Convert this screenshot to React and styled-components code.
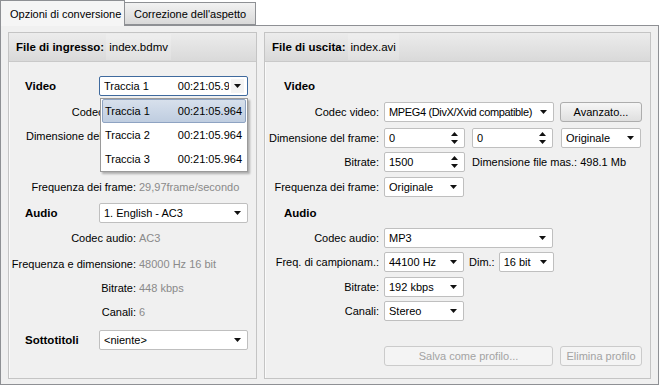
import React from 'react';
import styled, { createGlobalStyle } from 'styled-components';

const GlobalStyle = createGlobalStyle`
  html, body {
    margin: 0;
    padding: 0;
    background: #ffffff;
  }
  body {
    font-family: "Liberation Sans", Arial, sans-serif;
    font-size: 11px;
    color: #000;
  }
`;

const Window = styled.div`
  width: 659px;
  height: 387px;
  display: flex;
  flex-direction: column;
  background: #ffffff;
`;

const TabBar = styled.div`
  display: flex;
  align-items: flex-end;
  height: 25px;
  position: relative;
  z-index: 1;
`;

const Tab = styled.div`
  box-sizing: border-box;
  height: ${p => (p.$active ? '26px' : '23px')};
  margin-bottom: ${p => (p.$active ? '-1px' : '0')};
  padding: 0 9px;
  width: ${p => p.$width}px;
  display: flex;
  align-items: center;
  border: 1px solid #8e9094;
  border-bottom: ${p => (p.$active ? 'none' : '1px solid #8e9094')};
  border-left: ${p => (p.$first ? '1px solid #8e9094' : 'none')};
  background: ${p =>
    p.$active ? '#f5f5f5' : 'linear-gradient(#f2f2f2, #d9d9d9)'};
  font-size: 11px;
  white-space: nowrap;
`;

const TabPage = styled.div`
  box-sizing: border-box;
  height: 360px;
  border: 1px solid #8e9094;
  background: #f0f0f0;
  padding: 6px 7px 5px 7px;
  display: flex;
  gap: 7px;
`;

const Panel = styled.div`
  box-sizing: border-box;
  width: ${p => p.$width}px;
  height: 347px;
  border: 1px solid #c4c4c4;
  box-shadow: inset 1px 1px 0 #fafafa;
  display: flex;
  flex-direction: column;
`;

const PanelHeader = styled.div`
  height: 28px;
  border-bottom: 1px solid #c9c9c9;
  background: linear-gradient(#ececec, #d9d9d9);
  display: flex;
  align-items: center;
  padding-left: 7px;
  gap: 5px;
  font-size: 11.5px;
`;

const HeaderLabel = styled.span`
  font-weight: bold;
`;

const HeaderValue = styled.span`
  padding: 7px 3px;
  margin-left: -3px;
  background: rgba(255, 255, 255, 0.18);
`;

const PanelBody = styled.div`
  position: relative;
  flex: 1;
  display: flex;
  flex-direction: column;
  padding-top: 12px;
`;

const Row = styled.div`
  height: 24px;
  margin-top: ${p => p.$mt || 0}px;
  display: flex;
  align-items: center;
`;

const SectionTitle = styled.div`
  font-weight: bold;
  font-size: 11.5px;
  padding-left: ${p => p.$indent}px;
  width: ${p => p.$width}px;
  box-sizing: border-box;
`;

const Label = styled.div`
  width: ${p => p.$width}px;
  text-align: right;
  white-space: nowrap;
  flex-shrink: 0;
  margin-right: ${p => p.$gap}px;
`;

const InfoValue = styled.div`
  color: #8a8a8a;
  white-space: nowrap;
`;

const PlainText = styled.div`
  white-space: nowrap;
  margin-left: ${p => p.$ml || 0}px;
  margin-right: ${p => p.$mr || 0}px;
`;

const Field = styled.div`
  box-sizing: border-box;
  width: ${p => p.$width}px;
  height: 20px;
  margin-left: ${p => p.$ml || 0}px;
  background: #ffffff;
  border: 1px solid ${p => (p.$focused ? '#3f6a9e' : '#bfbfbf')};
  border-radius: 2px;
  display: flex;
  align-items: center;
  padding-left: 4px;
  padding-right: 3px;
  gap: 2px;
  flex-shrink: 0;
`;

const FieldText = styled.div`
  flex: 1;
  overflow: hidden;
  white-space: nowrap;
  display: flex;
  letter-spacing: ${p => (p.$tight ? '-0.35px' : 'normal')};
`;

const SplitText = styled.div`
  flex: 0 0 calc(100% + ${p => p.$overflow}px);
  display: flex;
  justify-content: space-between;
`;

const ArrowBox = styled.div`
  width: 11px;
  height: 14px;
  display: flex;
  align-items: center;
  justify-content: center;
  background: ${p => (p.$focused ? '#f4f4f4' : 'transparent')};
  padding: 0 1px;
`;

const Arrow = () => (
  <svg width="7" height="4" viewBox="0 0 7 4">
    <path d="M0 0 L7 0 L3.5 4 Z" fill="#111" />
  </svg>
);

const SpinArrows = () => (
  <svg width="7" height="12" viewBox="0 0 7 12">
    <path d="M3.5 0 L7 4 L0 4 Z" fill="#111" />
    <path d="M0 8 L7 8 L3.5 12 Z" fill="#111" />
  </svg>
);

const Combo = ({ width, ml, focused, tight, children }) => (
  <Field $width={width} $ml={ml} $focused={focused}>
    <FieldText $tight={tight}>{children}</FieldText>
    <ArrowBox $focused={focused}>
      <Arrow />
    </ArrowBox>
  </Field>
);

const Spin = ({ width, ml, value }) => (
  <Field $width={width} $ml={ml}>
    <FieldText>{value}</FieldText>
    <ArrowBox>
      <SpinArrows />
    </ArrowBox>
  </Field>
);

const Button = styled.div`
  box-sizing: border-box;
  width: ${p => p.$width}px;
  height: 20px;
  margin-left: ${p => p.$ml || 0}px;
  border: 1px solid ${p => (p.$disabled ? '#cbcbcb' : '#adadad')};
  border-radius: 3px;
  background: ${p =>
    p.$disabled ? '#f4f4f4' : 'linear-gradient(#f6f6f6, #dfdfdf)'};
  color: ${p => (p.$disabled ? '#a3a3a3' : '#000')};
  display: flex;
  align-items: center;
  justify-content: center;
  flex-shrink: 0;
`;

const Popup = styled.div`
  position: absolute;
  left: 91px;
  top: 36px;
  width: 148px;
  box-sizing: border-box;
  background: #ffffff;
  border: 1px solid #9a9a9a;
  box-shadow: 2px 2px 2px rgba(0, 0, 0, 0.28);
  z-index: 5;
`;

const PopupItem = styled.div`
  height: 24px;
  box-sizing: border-box;
  margin: 0 1px;
  padding: 0 3px 0 2px;
  display: flex;
  align-items: center;
  justify-content: space-between;
  border-radius: 2px;
  border: 1px solid ${p => (p.$selected ? '#8ea3c2' : 'transparent')};
  background: ${p =>
    p.$selected ? 'linear-gradient(#d7e0ec, #bfcde0)' : 'transparent'};
`;

const tracks = ['Traccia 1', 'Traccia 2', 'Traccia 3'];

const LEFT_LABEL = 127;
const RIGHT_LABEL = 114;

const InfoRow = ({ label, value, mt }) => (
  <Row $mt={mt}>
    <Label $width={LEFT_LABEL} $gap={3}>{label}</Label>
    <InfoValue>{value}</InfoValue>
  </Row>
);

const InputPanel = () => (
  <Panel $width={249}>
    <PanelHeader>
      <HeaderLabel>File di ingresso:</HeaderLabel>
      <HeaderValue>index.bdmv</HeaderValue>
    </PanelHeader>
    <PanelBody>
      <Row>
        <SectionTitle $indent={16} $width={90}>Video</SectionTitle>
        <Combo width={149} focused>
          <SplitText $overflow={13}>
            <span>Traccia 1</span>
            <span>00:21:05.964</span>
          </SplitText>
        </Combo>
      </Row>
      <InfoRow label="Codec video:" value="" mt={2} />
      <InfoRow label="Dimensione del frame:" value="" />
      <InfoRow label="Bitrate:" value="" />
      <InfoRow label="Frequenza dei frame:" value="29,97frame/secondo" mt={3} />
      <Row $mt={2}>
        <SectionTitle $indent={16} $width={90}>Audio</SectionTitle>
        <Combo width={149}>1. English - AC3</Combo>
      </Row>
      <InfoRow label="Codec audio:" value="AC3" mt={1} />
      <InfoRow label="Frequenza e dimensione:" value="48000 Hz 16 bit" mt={2} />
      <InfoRow label="Bitrate:" value="448 kbps" />
      <InfoRow label="Canali:" value="6" />
      <Row $mt={4}>
        <SectionTitle $indent={16} $width={90}>Sottotitoli</SectionTitle>
        <Combo width={149}>&lt;niente&gt;</Combo>
      </Row>

      <Popup>
        {tracks.map((t, i) => (
          <PopupItem key={t} $selected={i === 0}>
            <span>{t}</span>
            <span>00:21:05.964</span>
          </PopupItem>
        ))}
      </Popup>
    </PanelBody>
  </Panel>
);

const FormRow = ({ label, mt, children }) => (
  <Row $mt={mt}>
    <Label $width={RIGHT_LABEL} $gap={5}>{label}</Label>
    {children}
  </Row>
);

const OutputPanel = () => (
  <Panel $width={387}>
    <PanelHeader>
      <HeaderLabel>File di uscita:</HeaderLabel>
      <HeaderValue>index.avi</HeaderValue>
    </PanelHeader>
    <PanelBody>
      <Row>
        <SectionTitle $indent={19} $width={200}>Video</SectionTitle>
      </Row>
      <FormRow label="Codec video:" mt={2}>
        <Combo width={170} tight>MPEG4 (DivX/Xvid compatible)</Combo>
        <Button $width={82} $ml={6}>Avanzato...</Button>
      </FormRow>
      <FormRow label="Dimensione del frame:" mt={2}>
        <Spin width={81} value="0" />
        <Spin width={81} ml={7} value="0" />
        <Combo width={80} ml={8}>Originale</Combo>
      </FormRow>
      <FormRow label="Bitrate:">
        <Spin width={81} value="1500" />
        <PlainText $ml={7}>Dimensione file mas.: 498.1 Mb</PlainText>
      </FormRow>
      <FormRow label="Frequenza dei frame:" mt={1}>
        <Combo width={80}>Originale</Combo>
      </FormRow>
      <Row $mt={2}>
        <SectionTitle $indent={19} $width={200}>Audio</SectionTitle>
      </Row>
      <FormRow label="Codec audio:" mt={1}>
        <Combo width={169}>MP3</Combo>
      </FormRow>
      <FormRow label="Freq. di campionam.:">
        <Combo width={80}>44100 Hz</Combo>
        <PlainText $ml={5} $mr={4}>Dim.:</PlainText>
        <Combo width={55}>16 bit</Combo>
      </FormRow>
      <FormRow label="Bitrate:" mt={1}>
        <Combo width={80}>192 kbps</Combo>
      </FormRow>
      <FormRow label="Canali:">
        <Combo width={80}>Stereo</Combo>
      </FormRow>
      <FormRow label="" mt={21}>
        <Button $width={169} $disabled>Salva come profilo...</Button>
        <Button $width={82} $ml={7} $disabled>Elimina profilo</Button>
      </FormRow>
    </PanelBody>
  </Panel>
);

export default function App() {
  return (
    <>
      <GlobalStyle />
      <Window>
        <TabBar>
          <Tab $active $first $width={125}>Opzioni di conversione</Tab>
          <Tab $width={131}>Correzione dell'aspetto</Tab>
        </TabBar>
        <TabPage>
          <InputPanel />
          <OutputPanel />
        </TabPage>
      </Window>
    </>
  );
}
